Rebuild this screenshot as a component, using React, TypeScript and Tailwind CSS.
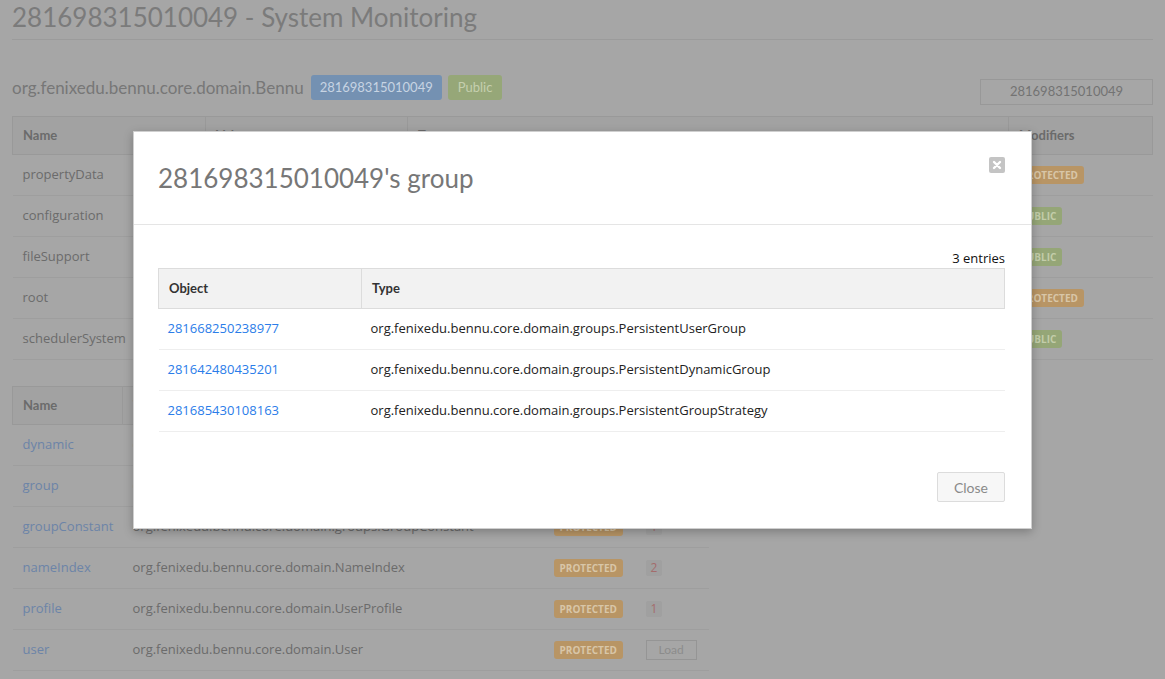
import React from 'react';

interface Slot {
  name: string;
  modifier: 'PROTECTED' | 'PUBLIC';
}

interface Relation {
  name: string;
  type: string;
  count?: string;
}

interface GroupEntry {
  oid: string;
  type: string;
}

const slots: Slot[] = [
  { name: 'propertyData', modifier: 'PROTECTED' },
  { name: 'configuration', modifier: 'PUBLIC' },
  { name: 'fileSupport', modifier: 'PUBLIC' },
  { name: 'root', modifier: 'PROTECTED' },
  { name: 'schedulerSystem', modifier: 'PUBLIC' },
];

const relations: Relation[] = [
  { name: 'dynamic', type: 'org.fenixedu.bennu.core.domain.groups.PersistentDynamicGroup', count: '1' },
  { name: 'group', type: 'org.fenixedu.bennu.core.domain.groups.PersistentUserGroup', count: '1' },
  { name: 'groupConstant', type: 'org.fenixedu.bennu.core.domain.groups.GroupConstant', count: '1' },
  { name: 'nameIndex', type: 'org.fenixedu.bennu.core.domain.NameIndex', count: '2' },
  { name: 'profile', type: 'org.fenixedu.bennu.core.domain.UserProfile', count: '1' },
  { name: 'user', type: 'org.fenixedu.bennu.core.domain.User' },
];

const entries: GroupEntry[] = [
  { oid: '281668250238977', type: 'org.fenixedu.bennu.core.domain.groups.PersistentUserGroup' },
  { oid: '281642480435201', type: 'org.fenixedu.bennu.core.domain.groups.PersistentDynamicGroup' },
  { oid: '281685430108163', type: 'org.fenixedu.bennu.core.domain.groups.PersistentGroupStrategy' },
];

const body = { fontFamily: '"Open Sans", "Liberation Sans", sans-serif' };
const head = { fontFamily: 'Lato, "Open Sans", sans-serif' };

const ModifierBadge: React.FC<{ kind: 'PROTECTED' | 'PUBLIC' }> = ({ kind }) =>
  kind === 'PROTECTED' ? (
    <span className="inline-block rounded-[3px] bg-[#b89565] px-[6px] py-[2px] text-[10px] font-bold leading-[14px] text-[#d8c6a8]">
      PROTECTED
    </span>
  ) : (
    <span className="inline-block rounded-[3px] bg-[#95a677] px-[6px] py-[2px] text-[10px] font-bold leading-[14px] text-[#c3cdaa]">
      PUBLIC
    </span>
  );

const App: React.FC = () => {
  return (
    <div className="relative h-[679px] w-[1165px] overflow-hidden bg-[#a6a6a6]" style={body}>
      {/* dimmed page behind the modal */}
      <div className="px-3">
        <h1 className="border-b border-[#9b9b9b] pb-[6px] pt-[2px] text-[26px] leading-[31px] text-[#7b7b7b]" style={head}>
          281698315010049 - System Monitoring
        </h1>

        <div className="mt-[30px] flex items-center justify-between">
          <div className="flex items-center gap-[6px]">
            <span className="text-[17px] text-[#777]" style={head}>org.fenixedu.bennu.core.domain.Bennu</span>
            <span className="ml-[1px] rounded-[3px] bg-[#7491b2] px-[9px] py-[4px] text-[13px] leading-[17px] text-[#c7d4e3]" style={head}>
              281698315010049
            </span>
            <span className="rounded-[3px] bg-[#96a778] px-[10px] py-[4px] text-[13px] leading-[17px] text-[#c5cfaf]" style={head}>
              Public
            </span>
          </div>
          <div className="mt-[9px] flex h-[26px] w-[173px] items-center justify-center border border-[#989898] text-[13px] text-[#737373]" style={head}>
            281698315010049
          </div>
        </div>

        <table className="mt-[11px] w-full border-collapse text-[13px] text-[#6b6b6b]">
          <thead>
            <tr className="h-[38px] bg-[#a2a2a2] text-left" style={head}>
              <th className="w-[193px] border border-[#999] pl-[10px] font-bold">Name</th>
              <th className="w-[202px] border border-[#999] pl-[10px] font-bold">Value</th>
              <th className="border border-[#999] pl-[10px] font-bold">Type</th>
              <th className="w-[144px] border border-[#999] pl-[10px] font-bold">Modifiers</th>
            </tr>
          </thead>
          <tbody>
            {slots.map((s) => (
              <tr key={s.name} className="h-[41px] border-b border-[#9e9e9e]">
                <td className="pl-[10px]">{s.name}</td>
                <td></td>
                <td></td>
                <td className="pl-[6px]">
                  <ModifierBadge kind={s.modifier} />
                </td>
              </tr>
            ))}
          </tbody>
        </table>

        <table className="mt-[26px] w-[697px] border-collapse text-[13px] text-[#6b6b6b]">
          <thead>
            <tr className="h-[38px] bg-[#a2a2a2] text-left" style={head}>
              <th className="w-[110px] border border-[#999] pl-[10px] font-bold">Name</th>
              <th className="w-[422px] border border-[#999] pl-[10px] font-bold">Type</th>
              <th className="w-[92px] border border-[#999] pl-[10px] font-bold">Modifiers</th>
              <th className="border border-[#999] pl-[10px] font-bold"></th>
            </tr>
          </thead>
          <tbody>
            {relations.map((r) => (
              <tr key={r.name} className="h-[41px] border-b border-[#9e9e9e]">
                <td className="pl-[10px] text-[#6c84a8]">{r.name}</td>
                <td className="pl-[10px]">{r.type}</td>
                <td className="pl-[9px]">
                  <ModifierBadge kind="PROTECTED" />
                </td>
                <td className="pl-[9px]">
                  {r.count ? (
                    <span className="inline-block rounded-[2px] bg-[#a0a0a0] px-[5px] text-[12px] leading-[16px] text-[#a46c6c]">
                      {r.count}
                    </span>
                  ) : (
                    <span className="inline-block border border-[#959595] px-[12px] text-[12px] leading-[18px] text-[#8c8c8c]" style={head}>
                      Load
                    </span>
                  )}
                </td>
              </tr>
            ))}
          </tbody>
        </table>
      </div>

      {/* modal */}
      <div className="absolute left-[133px] top-[131px] w-[899px] border border-[#cfcfcf] bg-white shadow-[0_3px_9px_rgba(0,0,0,0.25)]">
        <div className="flex items-start justify-between border-b border-[#e5e5e5] pb-[29px] pl-[24px] pr-[26px] pt-[29px]">
          <h4 className="text-[26px] leading-[34px] text-[#777]" style={head}>
            281698315010049's group
          </h4>
          <button className="mt-[-4px] flex h-[16px] w-[16px] items-center justify-center rounded-[2px] bg-[#c4c4c4]">
            <svg width="10" height="10" viewBox="0 0 10 10">
              <path d="M2 2 L8 8 M8 2 L2 8" stroke="#fff" strokeWidth="2.4" strokeLinecap="round" />
            </svg>
          </button>
        </div>

        <div className="pb-[40px] pl-[24px] pr-[26px] pt-[24px]">
          <div className="mb-[1px] text-right text-[13px] leading-[18px] text-[#111]">3 entries</div>
          <table className="w-full border-collapse text-[13px] text-[#222]">
            <thead>
              <tr className="h-[40px] bg-[#f2f2f2] text-left text-[#333]" style={head}>
                <th className="w-[203px] border border-[#dcdcdc] pl-[10px] font-bold">Object</th>
                <th className="border border-[#dcdcdc] pl-[10px] font-bold">Type</th>
              </tr>
            </thead>
            <tbody>
              {entries.map((e) => (
                <tr key={e.oid} className="h-[41px] border-b border-[#eeeeee]">
                  <td className="pl-[9px]">
                    <a className="text-[#2b7de9]" href="#">
                      {e.oid}
                    </a>
                  </td>
                  <td className="pl-[9px]">{e.type}</td>
                </tr>
              ))}
            </tbody>
          </table>
        </div>

        <div className="flex justify-end pb-[26px] pl-[24px] pr-[26px]">
          <button className="h-[30px] w-[68px] rounded-[2px] border border-[#dcdcdc] bg-[#f7f7f7] text-[14px] text-[#8a8a8a]" style={head}>
            Close
          </button>
        </div>
      </div>
    </div>
  );
};

export default App;
